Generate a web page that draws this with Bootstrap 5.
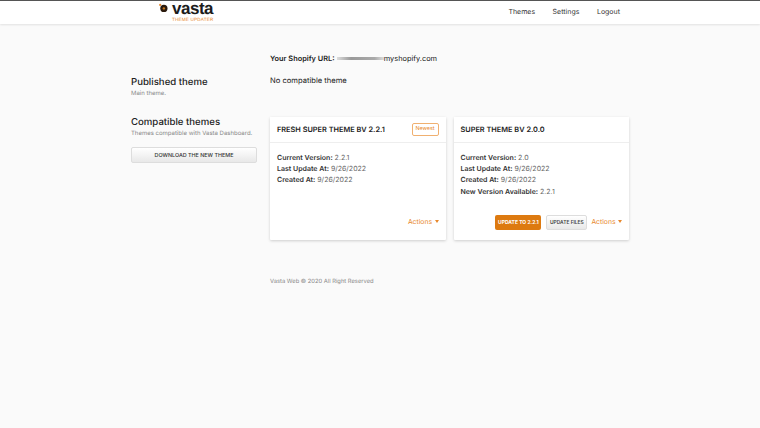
<!DOCTYPE html>
<html lang="en">
<head>
  <meta charset="UTF-8">
  <meta name="viewport" content="width=device-width, initial-scale=1.0">
  <title>Vasta Theme Updater</title>
  <link href="https://cdn.jsdelivr.net/npm/bootstrap@5.3.2/dist/css/bootstrap.min.css" rel="stylesheet">
  <style>
    html, body { height: 100%; }
    body { background: #fafafa; font-family: Inter, "Liberation Sans", sans-serif; font-size: 7px; color: #333; overflow: hidden; text-rendering: geometricPrecision; }
    .top-bar { height: 24px; background: #fff; border-top: 1px solid #555; box-shadow: 0 1px 2px rgba(0,0,0,.1); padding: 0 140px 0 159px; }
    .logo-box { width: 54px; height: 22px; }
    .logo-word { font-family: "Liberation Sans", sans-serif; font-size: 17px; font-weight: 700; letter-spacing: -.5px; line-height: 13px; color: #1c1c1c; }
    .logo-sub { font-family: "Liberation Sans", sans-serif; font-size: 4.6px; letter-spacing: .2px; line-height: 6px; color: #e8882c; margin: 2px 0 0 13px; white-space: nowrap; }
    .top-link { font-size: 7px; color: #333; text-decoration: none; }
    .page-wrap { width: 498px; margin-left: 131px; }
    .side-col { width: 126px; }
    .side-first { margin-top: 52px; }
    .side-second { margin-top: 18px; }
    .main-col { width: 359px; margin-left: 13px; }
    .url-line { font-size: 7.4px; line-height: 12px; margin-top: 29px; color: #222; }
    .blur-bar { display: inline-block; width: 47px; height: 3px; background: linear-gradient(90deg,#ddd,#999 30%,#aaa 80%,#ddd); vertical-align: middle; }
    .none-line { font-size: 7.6px; line-height: 12px; margin-top: 10px; color: #222; }
    .side-title { font-size: 9.6px; font-weight: 500; line-height: 13px; color: #222; margin: 0; }
    .side-sub { font-size: 6px; line-height: 8px; color: #888; margin: 1px 0 0; }
    .dl-btn { width: 126px; height: 16px; margin-top: 9px; font-size: 5.4px; font-weight: 500; padding: 0; color: #333; border: 1px solid #ddd; border-radius: 2px; background: linear-gradient(#fff,#e8e8e8); }
    .card-row { gap: 8px; margin-top: 30px; }
    .theme-card { width: 175.5px; height: 123px; border: 0; border-radius: 1px; box-shadow: 0 1px 3px rgba(0,0,0,.18); }
    .theme-head { height: 26px; padding: 0 7px; border-bottom: 1px solid #eee; background: #fff; }
    .theme-name { font-size: 7.35px; font-weight: 600; color: #222; }
    .new-tag { width: 27px; height: 13px; font-size: 5.4px; color: #e8882c; border: 1px solid #f0b070; border-radius: 2px; }
    .theme-body { padding: 9px 7px 0; }
    .info-line { font-size: 7px; line-height: 11.2px; color: #666; }
    .info-line b { font-weight: 600; color: #333; }
    .theme-foot { height: 25px; padding: 0 7px 10px 0; gap: 4px; }
    .act-link { font-size: 6.8px; color: #e8882c; text-decoration: none; }
    .act-link::after { content: ""; display: inline-block; margin-left: 2.5px; vertical-align: 1px; border-top: 3px solid #e8882c; border-left: 2.5px solid transparent; border-right: 2.5px solid transparent; }
    .upd-btn { width: 46px; height: 15px; margin-right: 1px; padding: 0; font-size: 5px; font-weight: 700; color: #fff; background: #dd7a10; border: 0; border-radius: 2px; white-space: nowrap; }
    .files-btn { width: 41px; height: 15px; padding: 0; font-size: 4.9px; font-weight: 600; color: #444; background: linear-gradient(#fff,#e8e8e8); border: 1px solid #ddd; border-radius: 2px; white-space: nowrap; }
    .foot-note { font-size: 5.8px; color: #888; margin-top: 38px; line-height: 8px; }
  </style>
</head>
<body>
  <nav class="top-bar d-flex align-items-center justify-content-between">
    <a href="#" class="logo-box d-block text-decoration-none">
      <div class="d-flex align-items-center">
        <svg width="12" height="12" viewBox="0 0 12 12">
          <circle cx="6.5" cy="6.5" r="4.8" fill="#2a1a0c"/>
          <circle cx="6.5" cy="6.5" r="1.6" fill="#c9781e"/>
          <circle cx="1.6" cy="2" r="1.5" fill="#e8882c"/>
        </svg>
        <span class="logo-word ms-1">vasta</span>
      </div>
      <div class="logo-sub">THEME UPDATER</div>
    </a>
    <div class="d-flex" style="gap:17.5px">
      <a href="#" class="top-link">Themes</a>
      <a href="#" class="top-link">Settings</a>
      <a href="#" class="top-link">Logout</a>
    </div>
  </nav>

  <div class="page-wrap d-flex">
    <div class="side-col">
      <div class="side-first">
        <h2 class="side-title">Published theme</h2>
        <p class="side-sub">Main theme.</p>
      </div>
      <div class="side-second">
        <h2 class="side-title">Compatible themes</h2>
        <p class="side-sub">Themes compatible with Vasta Dashboard.</p>
        <button class="btn dl-btn">DOWNLOAD THE NEW THEME</button>
      </div>
    </div>
    <div class="main-col">
      <div class="url-line"><b class="fw-semibold">Your Shopify URL:</b> <span class="blur-bar"></span>myshopify.com</div>
      <div class="none-line">No compatible theme</div>
      <div class="card-row d-flex">
        <div class="card theme-card">
          <div class="theme-head d-flex align-items-center justify-content-between">
            <span class="theme-name">FRESH SUPER THEME BV 2.2.1</span>
            <span class="new-tag d-flex align-items-center justify-content-center">Newest</span>
          </div>
          <div class="theme-body flex-grow-1">
            <div class="info-line"><b>Current Version:</b> 2.2.1</div>
            <div class="info-line"><b>Last Update At:</b> 9/26/2022</div>
            <div class="info-line"><b>Created At:</b> 9/26/2022</div>
          </div>
          <div class="theme-foot d-flex align-items-center justify-content-end">
            <a href="#" class="act-link">Actions</a>
          </div>
        </div>
        <div class="card theme-card">
          <div class="theme-head d-flex align-items-center">
            <span class="theme-name">SUPER THEME BV 2.0.0</span>
          </div>
          <div class="theme-body flex-grow-1">
            <div class="info-line"><b>Current Version:</b> 2.0</div>
            <div class="info-line"><b>Last Update At:</b> 9/26/2022</div>
            <div class="info-line"><b>Created At:</b> 9/26/2022</div>
            <div class="info-line"><b>New Version Available:</b> 2.2.1</div>
          </div>
          <div class="theme-foot d-flex align-items-center justify-content-end">
            <button class="btn upd-btn">UPDATE TO 2.2.1</button>
            <button class="btn files-btn">UPDATE FILES</button>
            <a href="#" class="act-link">Actions</a>
          </div>
        </div>
      </div>
      <div class="foot-note">Vasta Web © 2020 All Right Reserved</div>
    </div>
  </div>
  <script src="https://cdn.jsdelivr.net/npm/bootstrap@5.3.2/dist/js/bootstrap.bundle.min.js"></script>
</body>
</html>
